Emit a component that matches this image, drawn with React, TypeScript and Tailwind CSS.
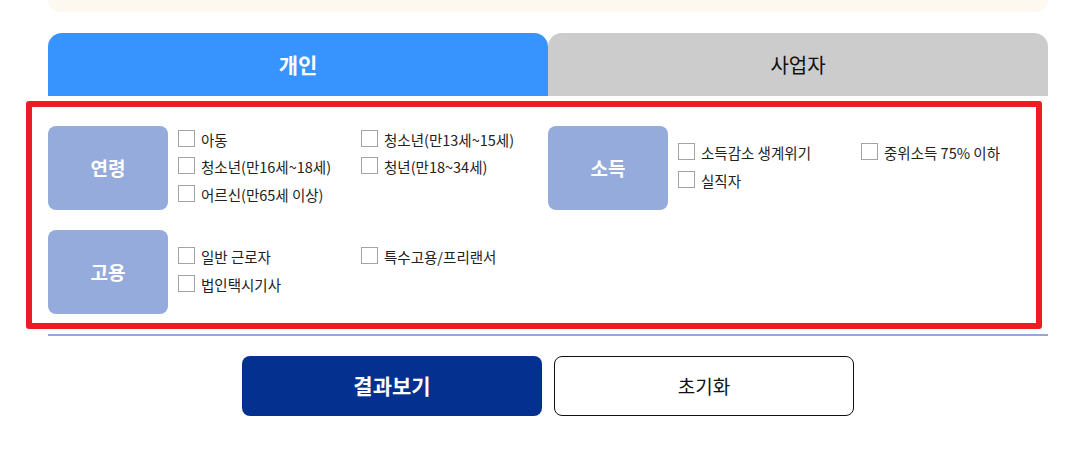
import React from 'react';

const font = { fontFamily: '"Noto Sans CJK KR", "Noto Sans", sans-serif' };

interface Section {
  label: string;
  items: string[][];
}

const sections: Section[] = [
  {
    label: '연령',
    items: [
      ['아동', '청소년(만13세~15세)'],
      ['청소년(만16세~18세)', '청년(만18~34세)'],
      ['어르신(만65세 이상)'],
    ],
  },
  {
    label: '소득',
    items: [['소득감소 생계위기', '중위소득 75% 이하'], ['실직자']],
  },
  {
    label: '고용',
    items: [['일반 근로자', '특수고용/프리랜서'], ['법인택시기사']],
  },
];

const CheckItem: React.FC<{ text: string }> = ({ text }) => (
  <label className="flex items-center h-[27.5px] cursor-pointer">
    <span className="w-[17px] h-[17px] border border-[#a3a3a3] bg-white shrink-0" />
    <span className="ml-[6px] pt-[3px] text-[14.5px] text-[#222] whitespace-nowrap">{text}</span>
  </label>
);

const FilterSection: React.FC<{ section: Section }> = ({ section }) => (
  <div className="flex items-center">
    <div className="w-[120px] h-[84px] rounded-[8px] bg-[#95abdb] flex items-center justify-center text-white text-[19px] font-bold shrink-0">
      {section.label}
    </div>
    <div className="ml-[10px] -mt-[5px] flex flex-col">
      {section.items.map((row, i) => (
        <div key={i} className="grid grid-cols-[183px_auto]">
          {row.map(t => (
            <CheckItem key={t} text={t} />
          ))}
        </div>
      ))}
    </div>
  </div>
);

export default function App() {
  return (
    <div className="w-[1088px] h-[457px] bg-white overflow-hidden" style={font}>
      <div className="ml-[48px] w-[1000px]">
        {/* top notice box */}
        <div className="h-[40px] -mt-[28px] rounded-[12px] bg-[#fdf8f0]" />

        {/* tabs */}
        <div className="mt-[21px] flex h-[63px]">
          <button className="w-[500px] rounded-t-[14px] bg-[#3793fd] text-white text-[21px] font-bold">개인</button>
          <button className="w-[500px] rounded-t-[14px] bg-[#cccccc] text-[#111] text-[20px]">사업자</button>
        </div>

        {/* filters */}
        <div className="mt-[5px] -ml-[22px] w-[1016px] border-[6px] border-[#ed1c24] rounded-[3px] pt-[19px] pb-[9px] pl-[16px]">
          <div className="grid grid-cols-[500px_1fr] gap-y-[20px]">
            <FilterSection section={sections[0]} />
            <FilterSection section={sections[1]} />
            <FilterSection section={sections[2]} />
          </div>
        </div>

        <div className="mt-[5px] h-[2px] bg-[#94a9d9]" />

        {/* actions */}
        <div className="mt-[20px] flex justify-center gap-[12px]">
          <button className="w-[300px] h-[60px] rounded-[8px] bg-[#04318f] text-white text-[21px] font-bold">결과보기</button>
          <button className="w-[300px] h-[60px] rounded-[8px] border border-[#111] bg-white text-[#111] text-[19px]">초기화</button>
        </div>
      </div>
    </div>
  );
}
